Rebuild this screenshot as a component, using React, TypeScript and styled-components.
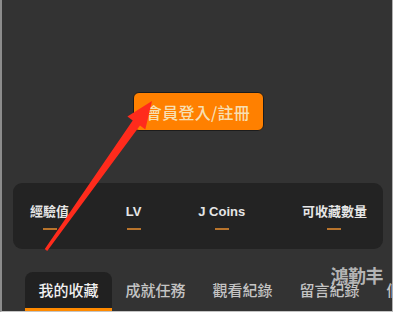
import React from 'react';
import styled, { createGlobalStyle } from 'styled-components';

const GlobalStyle = createGlobalStyle`
  html, body {
    margin: 0;
    padding: 0;
    background: #ffffff;
  }
  body {
    font-family: "Liberation Sans", "Noto Sans CJK TC", sans-serif;
  }
`;

const Frame = styled.div`
  position: relative;
  box-sizing: border-box;
  border-left: 2px solid #8c8c8c;
  border-right: 1px solid #b0b0b0;
  border-bottom: 1px solid #c4c4c4;
  width: 393px;
  height: 312px;
  background: #333333;
  overflow: hidden;
  display: flex;
  flex-direction: column;
  padding-top: 92px;
`;

const LoginButton = styled.button`
  align-self: center;
  width: 131px;
  height: 39px;
  margin-left: 2px;
  background: #ff8000;
  border: 1px solid #1c1c1c;
  border-radius: 6px;
  color: #f7dfb2;
  font-family: "Noto Sans CJK TC", sans-serif;
  font-size: 16px;
  font-weight: 500;
  letter-spacing: 0.3px;
  padding: 0;
  cursor: pointer;
`;

const StatsPanel = styled.div`
  margin: 52px 0 0 11px;
  width: 370px;
  height: 66px;
  box-sizing: border-box;
  padding: 20px 16px 0 17px;
  background: #232323;
  border-radius: 9px;
  display: flex;
  justify-content: space-between;
`;

const Stat = styled.div`
  display: flex;
  flex-direction: column;
  align-items: center;
  gap: 7px;
`;

const StatLabel = styled.span`
  font-family: "Liberation Sans", "Noto Sans CJK TC", sans-serif;
  font-size: 13px;
  line-height: 18px;
  font-weight: 600;
  color: #e6e6e6;
`;

const StatDash = styled.span`
  width: 14px;
  height: 2px;
  background: #b8742c;
`;

const TabBar = styled.div`
  margin: 23px 0 0 23px;
  display: flex;
  flex-wrap: nowrap;
`;

const Tab = styled.div<{ $active?: boolean }>`
  flex-shrink: 0;
  width: 87px;
  height: 39px;
  box-sizing: border-box;
  display: flex;
  align-items: center;
  justify-content: center;
  padding-bottom: 2px;
  font-family: "Noto Sans CJK TC", sans-serif;
  font-size: 15px;
  font-weight: 500;
  white-space: nowrap;
  color: ${(p) => (p.$active ? '#f0f0f0' : '#c4c4c4')};
  background: ${(p) => (p.$active ? '#212121' : 'transparent')};
  border-radius: 8px 8px 0 0;
  border-bottom: 3px solid ${(p) => (p.$active ? '#ff8a00' : 'transparent')};
`;

const Watermark = styled.div`
  position: absolute;
  right: 9px;
  top: 262px;
  font-family: "Noto Sans CJK SC", sans-serif;
  font-size: 18px;
  font-weight: 700;
  letter-spacing: -0.5px;
  color: rgba(205, 205, 205, 0.85);
`;

const Annotation = styled.svg`
  position: absolute;
  left: -2px;
  top: 0;
  pointer-events: none;
`;

const stats = ['經驗值', 'LV', 'J Coins', '可收藏數量'];
const tabs = ['我的收藏', '成就任務', '觀看紀錄', '留言紀錄', '個人資料'];

export default function App() {
  return (
    <>
      <GlobalStyle />
      <Frame>
        <LoginButton>會員登入/註冊</LoginButton>
        <StatsPanel>
          {stats.map((s) => (
            <Stat key={s}>
              <StatLabel>{s}</StatLabel>
              <StatDash />
            </Stat>
          ))}
        </StatsPanel>
        <TabBar>
          {tabs.map((t, i) => (
            <Tab key={t} $active={i === 0}>
              {t}
            </Tab>
          ))}
        </TabBar>
        <Watermark>鴻勤丰</Watermark>
        <Annotation width="400" height="314" viewBox="0 0 400 314">
          <polygon
            points="152,101 145.3,129.4 140,125.6 47.2,250.9 44.8,249.1 132.7,120.4 127.4,116.6"
            fill="#ff2b1c"
          />
        </Annotation>
      </Frame>
    </>
  );
}
